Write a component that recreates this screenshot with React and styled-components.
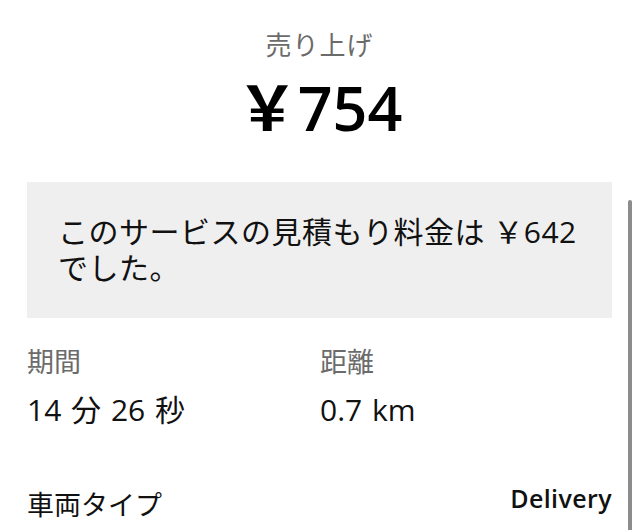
import React from "react";
import styled, { createGlobalStyle } from "styled-components";

const GlobalStyle = createGlobalStyle`
	html, body {
		margin: 0;
		padding: 0;
		background: #ffffff;
		overflow: hidden;
	}
	body {
		font-family: "Open Sans", "Noto Sans CJK JP", sans-serif;
		color: #111111;
	}
`;

const trip = {
	title: "売り上げ",
	total: "￥754",
	stats: [
		{ label: "期間", value: "14 分 26 秒" },
		{ label: "距離", value: "0.7 km" }
	],
	vehicleLabel: "車両タイプ",
	vehicle: "Delivery"
};

const App = () => {
	return (
		<Page>
			<GlobalStyle />
			<Header>
				<Title>{trip.title}</Title>
				<Amount>{trip.total}</Amount>
			</Header>

			<Notice>
				<NoticeLine>このサービスの見積もり料金は ￥642</NoticeLine>
				<NoticeLine>でした。</NoticeLine>
			</Notice>

			<StatGrid>
				{trip.stats.map((s) => (
					<Stat key={s.label}>
						<Label>{s.label}</Label>
						<Value>{s.value}</Value>
					</Stat>
				))}
			</StatGrid>

			<Row>
				<RowLabel>{trip.vehicleLabel}</RowLabel>
				<RowValue>{trip.vehicle}</RowValue>
			</Row>

			<ScrollThumb />
		</Page>
	);
};

const Page = styled.div`
	position: relative;
	height: 530px;
	padding: 0 28px 0 27px;
	box-sizing: border-box;
	overflow: hidden;
`;

const Header = styled.div`
	display: flex;
	flex-direction: column;
	align-items: center;
	padding-top: 28px;
`;

const Title = styled.div`
	font-size: 26px;
	line-height: 34px;
	color: #6b6b6b;
	letter-spacing: 1px;
`;

const Amount = styled.div`
	margin-top: 8px;
	font-size: 61px;
	line-height: 76px;
	font-weight: 600;
	color: #000000;
`;

const Notice = styled.div`
	margin-top: 36px;
	background: #efefef;
	padding: 32px 31px;
	display: flex;
	flex-direction: column;
`;

const NoticeLine = styled.div`
	font-size: 30px;
	line-height: 36px;
	letter-spacing: 0.5px;
	color: #111111;
`;

const StatGrid = styled.div`
	display: grid;
	grid-template-columns: 293px 1fr;
	margin-top: 27px;
`;

const Stat = styled.div`
	display: flex;
	flex-direction: column;
`;

const Label = styled.div`
	font-size: 27px;
	line-height: 34px;
	color: #6b6b6b;
`;

const Value = styled.div`
	margin-top: 11px;
	font-size: 30px;
	line-height: 40px;
	word-spacing: 2px;
	color: #111111;
`;

const Row = styled.div`
	display: flex;
	justify-content: space-between;
	align-items: flex-start;
	margin-top: 55px;
`;

const RowLabel = styled.div`
	font-size: 27px;
	line-height: 40px;
	color: #111111;
`;

const RowValue = styled.div`
	font-size: 25px;
	line-height: 26px;
	font-weight: 600;
	letter-spacing: 0.4px;
	color: #111111;
`;

const ScrollThumb = styled.div`
	position: absolute;
	top: 200px;
	right: 8px;
	width: 4px;
	height: 400px;
	border-radius: 2px;
	background: #8c8c8c;
`;

export default App;
